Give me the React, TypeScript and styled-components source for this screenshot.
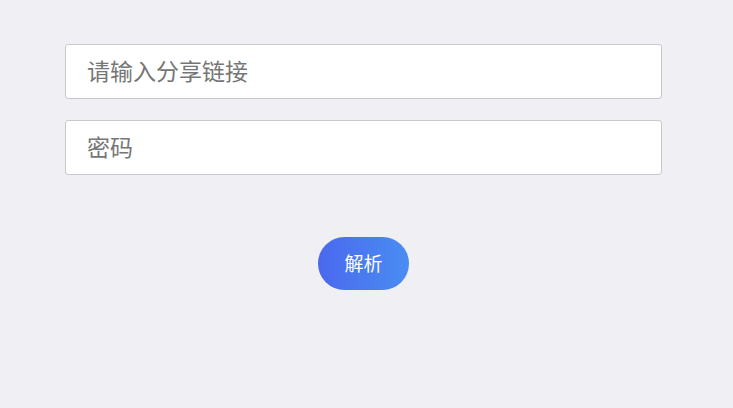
import React from 'react'
import styled, { createGlobalStyle } from 'styled-components'

const GlobalStyle = createGlobalStyle`
  html, body {
    margin: 0;
    padding: 0;
    background: #efeff4;
    font-family: "Noto Sans CJK SC", "Noto Sans", sans-serif;
  }
`

const Page = styled.div`
  min-height: 408px;
  box-sizing: border-box;
  padding: 44px 71px 0 65px;
  display: flex;
  flex-direction: column;
`

const Field = styled.input`
  box-sizing: border-box;
  width: 100%;
  height: 55px;
  margin-bottom: 21px;
  padding: 0 21px 3px;
  border: 1px solid #c8c8cc;
  border-radius: 3px;
  background: #fff;
  font-family: inherit;
  font-size: 23px;
  color: #333;
  outline: none;

  &::placeholder {
    color: #767676;
  }
`

const Actions = styled.div`
  display: flex;
  justify-content: center;
  margin-top: 41px;
`

const Button = styled.button`
  width: 91px;
  height: 53px;
  padding: 0 0 2px;
  border: none;
  border-radius: 27px;
  background: linear-gradient(90deg, #4a68ee, #4a8df2);
  color: #fff;
  font-family: inherit;
  font-size: 19px;
  cursor: pointer;
`

export default function App() {
  return (
    <>
      <GlobalStyle />
      <Page>
        <Field placeholder="请输入分享链接" />
        <Field placeholder="密码" />
        <Actions>
          <Button>解析</Button>
        </Actions>
      </Page>
    </>
  )
}
